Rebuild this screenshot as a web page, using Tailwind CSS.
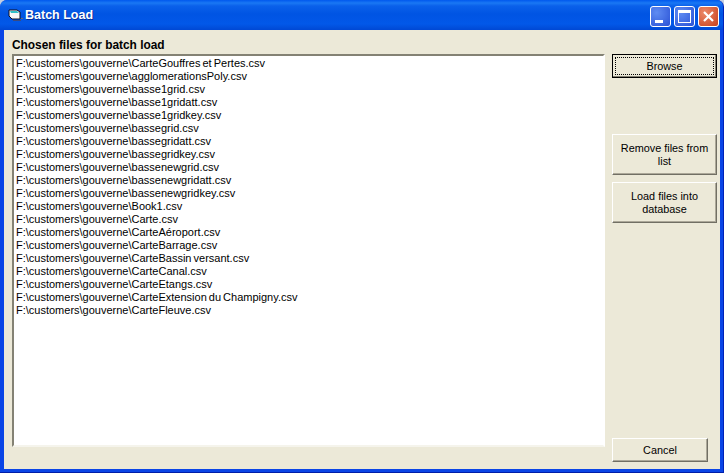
<!doctype html>
<html lang="en">
<head>
<meta charset="UTF-8">
<script src="https://cdn.jsdelivr.net/npm/@tailwindcss/browser@4"></script>
<title>Batch Load</title>
</head>
<body class="bg-[#c4cee0] overflow-hidden">
<!-- Window -->
<div class="w-[724px] h-[473px] flex flex-col rounded-t-[7px] overflow-hidden font-['Liberation_Sans',sans-serif] text-[10.85px] text-black bg-[#0a45e6] border-r border-b border-r-[#0022b8] border-b-[#001ea8]">
  <!-- Title bar -->
  <div class="h-[30px] shrink-0 flex items-center pl-[7px] pr-[4px] bg-[linear-gradient(to_bottom,#0058ee_0px,#1a78f4_3px,#0a60ea_6px,#0054e3_14px,#0258e8_24px,#0048d4_30px)]">
    <!-- App icon -->
    <svg width="17" height="16" viewBox="0 0 17 16" class="shrink-0">
      <path d="M2 3h8l3 2v7H5L2 9z" fill="#f7f7f7" stroke="#101020" stroke-width="1"/>
      <path d="M3 4h7l2 2H4z" fill="#30c0c8"/>
      <path d="M14 11h2v1h-2z" fill="#6a6a70"/>
      <path d="M6 13h8v1H6z" fill="#3a4a80"/>
    </svg>
    <span class="ml-[1px] font-bold text-white text-[12.5px] [text-shadow:1px_1px_0_#0a2f9a]">Batch Load</span>
    <div class="ml-auto flex gap-[2px] pt-[3px]">
      <div class="w-[21px] h-[21px] rounded-[3px] border border-white bg-[radial-gradient(circle_at_30%_30%,#5f8cf2,#2a52d6)] relative">
        <div class="absolute left-[4px] bottom-[3px] w-[8px] h-[3px] bg-white"></div>
      </div>
      <div class="ml-[1px] w-[21px] h-[21px] rounded-[3px] border border-white bg-[radial-gradient(circle_at_30%_30%,#5f8cf2,#2a52d6)] p-[3px]">
        <div class="w-full h-full border border-white border-t-[3px]"></div>
      </div>
      <div class="ml-[1px] w-[21px] h-[21px] rounded-[3px] border border-white bg-[radial-gradient(circle_at_30%_30%,#ec8a6a,#c9401c)] flex items-center justify-center">
        <svg width="13" height="13" viewBox="0 0 13 13"><path d="M2 2l9 9M11 2l-9 9" stroke="#fff" stroke-width="2.2"/></svg>
      </div>
    </div>
  </div>

  <!-- Client area -->
  <div class="flex-1 ml-[4px] mr-[3px] mb-[3px] bg-[#ece9d8] flex pl-[8px] min-h-0">
    <!-- Left column -->
    <div class="w-[593px] shrink-0 flex flex-col">
      <div class="h-[24px] shrink-0 pt-[9px] font-bold text-[11.9px] leading-[13px]">Chosen files for batch load</div>
      <div class="h-[393px] shrink-0 bg-white border-2 border-t-[#848274] border-l-[#848274] border-r-[#fff] border-b-[#f5f4ec] pl-[2px] pt-[1px] text-[11px] [word-spacing:-1px] leading-[13px] whitespace-nowrap overflow-hidden">
        <div>F:\customers\gouverne\CarteGouffres et Pertes.csv</div>
        <div>F:\customers\gouverne\agglomerationsPoly.csv</div>
        <div>F:\customers\gouverne\basse1grid.csv</div>
        <div>F:\customers\gouverne\basse1gridatt.csv</div>
        <div>F:\customers\gouverne\basse1gridkey.csv</div>
        <div>F:\customers\gouverne\bassegrid.csv</div>
        <div>F:\customers\gouverne\bassegridatt.csv</div>
        <div>F:\customers\gouverne\bassegridkey.csv</div>
        <div>F:\customers\gouverne\bassenewgrid.csv</div>
        <div>F:\customers\gouverne\bassenewgridatt.csv</div>
        <div>F:\customers\gouverne\bassenewgridkey.csv</div>
        <div>F:\customers\gouverne\Book1.csv</div>
        <div>F:\customers\gouverne\Carte.csv</div>
        <div>F:\customers\gouverne\CarteAéroport.csv</div>
        <div>F:\customers\gouverne\CarteBarrage.csv</div>
        <div>F:\customers\gouverne\CarteBassin versant.csv</div>
        <div>F:\customers\gouverne\CarteCanal.csv</div>
        <div>F:\customers\gouverne\CarteEtangs.csv</div>
        <div>F:\customers\gouverne\CarteExtension du Champigny.csv</div>
        <div>F:\customers\gouverne\CarteFleuve.csv</div>
      </div>
    </div>

    <!-- Buttons -->
    <div class="ml-[7px] w-[105px] flex flex-col pt-[24px] pb-[7px] text-center leading-[13px] [word-spacing:-1px]">
      <div class="h-[24px] border border-black bg-[#ece9d8] p-[2px] shadow-[inset_-1px_-1px_0_#848274]">
        <div class="h-full border border-dotted border-black flex items-center justify-center">Browse</div>
      </div>
      <button class="mt-[56px] h-[41px] border border-t-white border-l-white border-r-[#716f64] border-b-[#716f64] shadow-[inset_-1px_-1px_0_#aca899] px-[4px]">Remove files from list</button>
      <button class="mt-[7px] h-[41px] border border-t-white border-l-white border-r-[#716f64] border-b-[#716f64] shadow-[inset_-1px_-1px_0_#aca899] px-[12px]">Load files into database</button>
      <button class="mt-auto w-[96px] h-[24px] border border-t-white border-l-white border-r-[#716f64] border-b-[#716f64] shadow-[inset_-1px_-1px_0_#aca899]">Cancel</button>
    </div>
  </div>
</div>
</body>
</html>
